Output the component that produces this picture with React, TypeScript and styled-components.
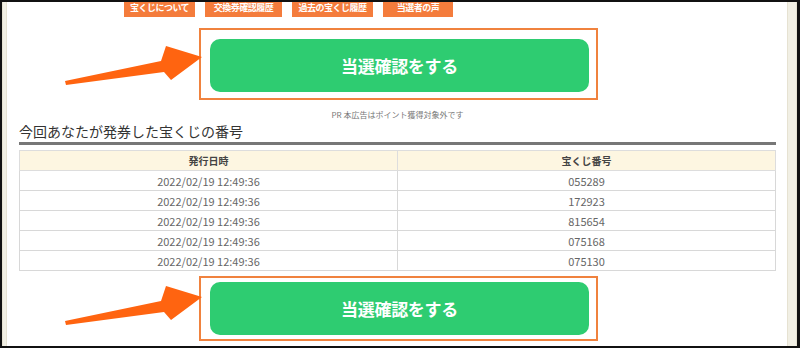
import React from "react";
import styled, { createGlobalStyle } from "styled-components";

const GlobalStyle = createGlobalStyle`
  html, body {
    margin: 0;
    padding: 0;
    background: #ffffff;
  }
  body {
    font-family: "Noto Sans CJK JP", "Noto Sans", sans-serif;
  }
`;

const navItems = [
    {label: "宝くじについて", width: 71},
    {label: "交換券確認履歴", width: 77},
    {label: "過去の宝くじ履歴", width: 81},
    {label: "当選者の声", width: 70},
];

const tickets = [
    {date: "2022/02/19 12:49:36", number: "055289"},
    {date: "2022/02/19 12:49:36", number: "172923"},
    {date: "2022/02/19 12:49:36", number: "815654"},
    {date: "2022/02/19 12:49:36", number: "075168"},
    {date: "2022/02/19 12:49:36", number: "075130"},
];

// 注釈の矢印 (スクリーンショット上のオレンジ矢印)
function Arrow() {
    return (
        <svg width="140" height="42" viewBox="0 0 140 42" xmlns="http://www.w3.org/2000/svg">
            <polygon
                points="0,35 96,15 101,0 137,11 106,34 99,26 1,39"
                fill="#ff6410"
            />
        </svg>
    );
}

function CheckButton({gap, padTop, padBottom, arrowTop}: {gap: number, padTop: number, padBottom: number, arrowTop: number}) {
    return (
        <ButtonRow $gap={gap}>
            <ArrowHolder $top={arrowTop}>
                <Arrow/>
            </ArrowHolder>
            <Highlight $padTop={padTop} $padBottom={padBottom}>
                <GreenButton>当選確認をする</GreenButton>
            </Highlight>
        </ButtonRow>
    );
}

export default function App() {
    return (
        <>
            <GlobalStyle/>
            <Frame>
                <SideStrip $width={5}/>
                <Main>
                    <Nav>
                        {navItems.map((item) => (
                            <NavButton key={item.label} $width={item.width}>{item.label}</NavButton>
                        ))}
                    </Nav>

                    <CheckButton gap={11} padTop={9} padBottom={6} arrowTop={18}/>

                    <PrNote>PR 本広告はポイント獲得対象外です</PrNote>

                    <Heading>今回あなたが発券した宝くじの番号</Heading>

                    <Table>
                        <thead>
                        <tr>
                            <Th>発行日時</Th>
                            <Th>宝くじ番号</Th>
                        </tr>
                        </thead>
                        <tbody>
                        {tickets.map((t, i) => (
                            <tr key={i}>
                                <Td>{t.date}</Td>
                                <Td>{t.number}</Td>
                            </tr>
                        ))}
                        </tbody>
                    </Table>

                    <CheckButton gap={5} padTop={4} padBottom={4} arrowTop={10}/>
                </Main>
                <SideStrip $width={10}/>
            </Frame>
        </>
    );
}

const Frame = styled.div`
  width: 800px;
  height: 348px;
  box-sizing: border-box;
  border: 2px solid #111;
  border-right-width: 3px;
  display: flex;
  overflow: hidden;
  background: #fff;
`;

const SideStrip = styled.div<{$width: number}>`
  box-sizing: border-box;
  width: ${({$width}) => $width}px;
  flex-shrink: 0;
  background: #f1efe4;
  border-left: 1px solid #e6e2d2;
  border-right: 1px solid #e6e2d2;
`;

const Main = styled.div`
  flex: 1;
  display: flex;
  flex-direction: column;
  padding: 0 11px 0 12px;
  background: #fff;
  min-width: 0;
`;

const Nav = styled.div`
  display: flex;
  gap: 10px;
  margin-left: 105px;
  height: 15px;
`;

const NavButton = styled.div<{$width: number}>`
  width: ${({$width}) => $width}px;
  height: 15px;
  background: #f47c3c;
  color: #fff;
  font-size: 9px;
  font-weight: bold;
  line-height: 11px;
  text-align: center;
  letter-spacing: -0.5px;
  overflow: hidden;
  white-space: nowrap;
`;

const ButtonRow = styled.div<{$gap: number}>`
  position: relative;
  display: flex;
  justify-content: center;
  margin-top: ${({$gap}) => $gap}px;
`;

const ArrowHolder = styled.div<{$top: number}>`
  position: absolute;
  left: 46px;
  top: ${({$top}) => $top}px;
  line-height: 0;
`;

const Highlight = styled.div<{$padTop: number, $padBottom: number}>`
  border: 2px solid #f0823e;
  padding: ${({$padTop}) => $padTop}px 7px ${({$padBottom}) => $padBottom}px 9px;
  margin-left: 2px;
`;

const GreenButton = styled.div`
  width: 379px;
  height: 53px;
  border-radius: 10px;
  background: #2ecc71;
  color: #fff;
  font-size: 17px;
  font-weight: bold;
  display: flex;
  align-items: center;
  justify-content: center;
  letter-spacing: -0.3px;
`;

const PrNote = styled.div`
  margin-top: 10px;
  text-align: center;
  font-size: 8px;
  line-height: 10px;
  color: #777;
`;

const Heading = styled.h2`
  margin: 2px 0 0 0;
  padding: 0 0 1px 0;
  font-size: 14px;
  font-weight: normal;
  line-height: 19px;
  color: #333;
  border-bottom: 3px solid #777;
`;

const Table = styled.table`
  margin-top: 5px;
  width: 100%;
  border-collapse: collapse;
  border: 1px solid #d8d8d8;
`;

const Th = styled.th`
  background: #fdf6e1;
  height: 19px;
  padding: 0;
  font-size: 10px;
  font-weight: bold;
  color: #444;
  text-align: center;
  border: 1px solid #dddddd;
  width: 50%;
`;

const Td = styled.td`
  height: 19px;
  padding: 0;
  font-size: 11px;
  color: #666;
  text-align: center;
  border: 1px solid #d8d8d8;
`;
